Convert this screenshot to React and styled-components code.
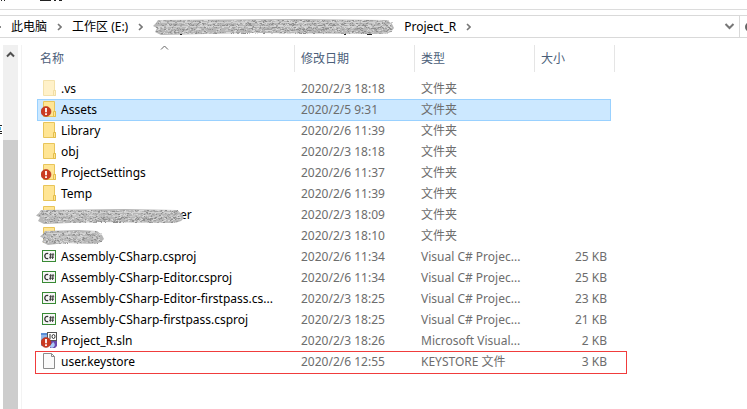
import React from "react";
import styled, { createGlobalStyle, css } from "styled-components";

const Global = createGlobalStyle`
  * { box-sizing: border-box; }
  body {
    margin: 0;
    background: #fff;
    color: #000;
    font: 12px/20px "Noto Sans", "Noto Sans CJK SC", sans-serif;
    overflow: hidden;
  }
  button { font: inherit; color: inherit; background: none; border: 0; padding: 0; }
`;

const Window = styled.div`
  display: flex;
  flex-direction: column;
  height: 100vh;
`;

const Ribbon = styled.div`
  height: 10px;
  flex: none;
  border-bottom: 1px solid #dcdcdc;
`;

const Remnant = styled.svg`
  display: block;
`;

const AddressRow = styled.div`
  display: flex;
  flex: none;
  margin-top: 5px;
  height: 23px;
  border: solid #d9d9d9;
  border-width: 1px 0;
`;

const Crumbs = styled.nav`
  display: flex;
  align-items: center;
  flex: 1;
  min-width: 0;
  gap: 10px;
  white-space: nowrap;
`;

const DropButton = styled.button`
  display: flex;
  align-items: center;
  padding: 0 4px;
`;

const SearchBox = styled.div`
  display: flex;
  align-items: center;
  width: 8px;
  padding-left: 5px;
  overflow: hidden;
  border-left: 1px solid #d9d9d9;
`;

const Body = styled.div`
  display: flex;
  flex: 1;
  min-height: 0;
  padding-top: 7px;
`;

const NavEdge = styled.div`
  width: 3px;
  flex: none;
  padding-top: 79px;
`;

const ScrollTrack = styled.div`
  display: flex;
  flex-direction: column;
  width: 15px;
  flex: none;
  background: #f0f0f0;
`;

const ScrollUp = styled.button`
  display: flex;
  justify-content: center;
  align-items: center;
  height: 18px;
  flex: none;
`;

const ScrollThumb = styled.div`
  flex: 1;
  margin-top: 77px;
  background: #cdcdcd;
`;

const Pane = styled.main`
  flex: 1;
  margin-left: 3px;
  padding-left: 15px;
  border-left: 1px solid #f3f3f3;
`;

const FileTable = styled.table`
  width: 574px;
  table-layout: fixed;
  border-collapse: collapse;
  white-space: nowrap;
`;

const HeadCell = styled.th`
  position: relative;
  width: ${(p) => p.$width};
  padding: 0 0 6px;
  font-weight: 400;
  text-align: left;
  color: #4c607a;
`;

const HeadButton = styled.button`
  display: block;
  width: ${(p) => (p.$last ? "calc(100% + 4px)" : "100%")};
  height: 27px;
  padding-left: ${(p) => (p.$first ? "3px" : "6px")};
  text-align: left;
  border-right: 1px solid #e5e5e5;
`;

const SortMark = styled.svg`
  position: absolute;
  top: 0;
  left: 50%;
  margin-left: -6px;
`;

const annotated = css`
  &::after {
    content: "";
    position: absolute;
    inset: 0 -16px -2px -2px;
    border: 1px solid #f03c3c;
  }
`;

const selected = css`
  background: #cce8ff;
  &::after {
    content: "";
    position: absolute;
    inset: 0 0 -1px;
    border: 1px solid #99d1ff;
  }
`;

const FileRow = styled.tr`
  position: relative;
  height: 21px;
  ${(p) => p.$selected && selected}
  ${(p) => p.$annotated && annotated}
`;

const Cell = styled.td`
  height: 21px;
  padding: 0 4px 0 6px;
  color: #6d6d6d;
  text-align: ${(p) => (p.$end ? "right" : "left")};
`;

const NameCell = styled.td`
  position: relative;
  height: 21px;
  padding: 0 0 0 4px;
`;

const NameContent = styled.div`
  display: flex;
  align-items: center;
  gap: 4px;
`;

const HiddenName = styled.span`
  display: inline-block;
  width: ${(p) => p.$width}px;
`;

const Scrawl = styled.svg`
  display: block;
  flex: none;
`;

const RowScrawl = styled(Scrawl)`
  position: absolute;
  left: ${(p) => p.$left}px;
  top: ${(p) => p.$top}px;
`;

const strokeShades = ["#8f8f8f", "#d8d8d8", "#a2a2a2", "#c9c9c9"];

function grain(width, height) {
  const paths = strokeShades.map(() => "");
  let seed = 7;
  for (let y = 1; y < height - 1; y += 1) {
    const inset = y < 3 || y > height - 4 ? 6 : 3;
    for (let x = inset; x < width - inset; x += 2) {
      seed = (seed * 1103515245 + 12345) % 2147483648;
      const r = seed / 2147483648;
      if (r < 0.62) {
        paths[Math.floor(r * 100) % 4] += `M${x + (y % 2)} ${y + 0.5}h${r < 0.3 ? 1 : 2}`;
      }
    }
  }
  return paths;
}

function Scribble({ as: Tag = Scrawl, width, height = 16, children, ...rest }) {
  const mid = height / 2;
  return (
    <Tag width={width} height={height} overflow="visible" aria-hidden="true" {...rest}>
      <path
        d={`M5 1 L${width * 0.6} 0 L${width - 7} 1 L${width - 2} 5 L${width} 9 L${width - 3} ${height - 3} L${width - 9} ${height - 1} L${width * 0.4} ${height - 2} L8 ${height} L2 ${height - 3} L4 ${mid + 1} L0 ${mid - 1} L3 4Z`}
        fill="#b7b7b7"
      />
      {grain(width, height).map((d, i) => (
        <path key={i} d={d} stroke={strokeShades[i]} />
      ))}
      <path
        d={`M5 ${mid - 0.5}H${width - 8}M8 3.5H${width - 12}`}
        stroke="#d2d2d2"
        strokeDasharray="6 2"
      />
      {children}
    </Tag>
  );
}

const Chevron = () => (
  <svg width="5" height="8" viewBox="0 0 5 8" aria-hidden="true">
    <path d="M1 1l3 3-3 3" fill="none" stroke="#777" strokeWidth="1.6" />
  </svg>
);

const Alert = () => (
  <g>
    <circle cx="5" cy="12.5" r="5" fill="#cb3a21" stroke="#a92c18" strokeWidth="0.5" />
    <path d="M5 9v4.300" stroke="#fff" strokeWidth="1.8" />
    <path d="M5 14.200v1.800" stroke="#fff" strokeWidth="1.8" />
  </g>
);

const Folder = ({ faded, alert }) => (
  <>
    <g opacity={faded ? 0.5 : 1}>
      <path d="M2.500 2.500h11v10h1v5h-12z" fill="#ffe594" stroke="#e8c55a" />
      <path d="M12.500 17.500v-5h2v5z" fill="#ffe594" stroke="#e3bd4b" />
    </g>
    {alert && <Alert />}
  </>
);

const CSharp = () => (
  <>
    <rect x="1.500" y="4.500" width="13" height="11" fill="#f6f6f6" stroke="#388a34" />
    <path d="M7.200 7.700C5.500 6.900 3.800 8 3.800 10s1.700 3.100 3.400 2.300" fill="none" stroke="#333" strokeWidth="1.3" />
    <path d="M9.800 7l-.6 6M12.100 7l-.6 6M8.200 8.800h5M8 11.200h5" stroke="#333" strokeWidth="0.9" />
  </>
);

const Solution = () => (
  <>
    <path d="M0 3h7v13H0z" fill="#8fb6ea" />
    <path d="M0 3h7v2H0z" fill="#5b8ed6" />
    <rect x="6.500" y="2.500" width="9" height="8" fill="#fff" stroke="#555" />
    <path d="M9 4v5" stroke="#333" />
    <ellipse cx="12.500" cy="6.500" rx="1.500" ry="2" fill="none" stroke="#333" />
    <path d="M9 11h7v5l-2 2H9z" fill="#6848ad" />
    <path d="M9 17c0-3 2-3 3-5 3 2 2 5-1 6z" fill="#a9c8f5" />
    <Alert />
  </>
);

const Blank = () => (
  <>
    <path d="M2.500 2.500h8l3 3v12h-11z" fill="#fafafa" stroke="#8c8c8c" />
    <path d="M10.500 2.500v3h3" fill="none" stroke="#8c8c8c" />
  </>
);

const icons = {
  folder: <Folder />,
  faded: <Folder faded />,
  alert: <Folder alert />,
  csharp: <CSharp />,
  solution: <Solution />,
  blank: <Blank />,
};

const files = [
  { icon: "faded", name: ".vs", date: "2020/2/3 18:18", type: "文件夹" },
  { icon: "alert", name: "Assets", date: "2020/2/5 9:31", type: "文件夹", selected: true },
  { icon: "folder", name: "Library", date: "2020/2/6 11:39", type: "文件夹" },
  { icon: "folder", name: "obj", date: "2020/2/3 18:18", type: "文件夹" },
  { icon: "alert", name: "ProjectSettings", date: "2020/2/6 11:37", type: "文件夹" },
  { icon: "folder", name: "Temp", date: "2020/2/6 11:39", type: "文件夹" },
  { icon: "folder", name: "er", hidden: 119, scrawl: { width: 148, left: -1, top: 5 }, date: "2020/2/3 18:09", type: "文件夹" },
  { icon: "folder", name: "", hidden: 40, scrawl: { width: 64, left: 3, top: 5 }, date: "2020/2/3 18:10", type: "文件夹" },
  { icon: "csharp", name: "Assembly-CSharp.csproj", date: "2020/2/6 11:34", type: "Visual C# Projec...", size: "25 KB" },
  { icon: "csharp", name: "Assembly-CSharp-Editor.csproj", date: "2020/2/6 11:34", type: "Visual C# Projec...", size: "25 KB" },
  { icon: "csharp", name: "Assembly-CSharp-Editor-firstpass.cs...", date: "2020/2/3 18:25", type: "Visual C# Projec...", size: "23 KB" },
  { icon: "csharp", name: "Assembly-CSharp-firstpass.csproj", date: "2020/2/3 18:25", type: "Visual C# Projec...", size: "21 KB" },
  { icon: "solution", name: "Project_R.sln", date: "2020/2/3 18:26", type: "Microsoft Visual...", size: "2 KB" },
  { icon: "blank", name: "user.keystore", date: "2020/2/6 12:55", type: "KEYSTORE 文件", size: "3 KB", annotated: true },
];

const columns = [
  { label: "名称", width: "258px" },
  { label: "修改日期", width: "120px" },
  { label: "类型", width: "120px" },
  { label: "大小", width: "76px" },
];

export default function App() {
  return (
    <Window>
      <Global />
      <Ribbon>
        <Remnant width="70" height="3" aria-hidden="true">
          <path d="M1 .5h1M4 .5h1M40 .5h11M54 .5h2M59 .5h3" stroke="#222" />
        </Remnant>
      </Ribbon>
      <AddressRow>
        <Crumbs aria-label="路径">
          <svg width="1" height="8" aria-hidden="true">
            <path d="M0 4h1" stroke="#888" strokeWidth="2" />
          </svg>
          <button>此电脑</button>
          <Chevron />
          <button>工作区 (E:)</button>
          <Chevron />
          <Scribble width={241}>
            <path d="M27 15.500h2M191 15.500h2M214 15.500h5" stroke="#222" />
          </Scribble>
          <button>Project_R</button>
          <Chevron />
        </Crumbs>
        <DropButton aria-label="展开">
          <svg width="11" height="7" viewBox="0 0 11 7">
            <path d="M1.500 1l4 4 4-4" fill="none" stroke="#777" strokeWidth="2" />
          </svg>
        </DropButton>
        <SearchBox>
          <svg width="10" height="12" aria-hidden="true">
            <circle cx="5" cy="6" r="4" fill="none" stroke="#666" strokeWidth="2" />
          </svg>
        </SearchBox>
      </AddressRow>
      <Body>
        <NavEdge>
          <Remnant width="3" height="10" aria-hidden="true">
            <path d="M0 1.500h2M0 7.500h2M0 9.500h2" stroke="#222" />
            <path d="M0 4.500h1" stroke="#4db5e8" strokeWidth="3" />
          </Remnant>
        </NavEdge>
        <ScrollTrack>
          <ScrollUp aria-label="向上滚动">
            <svg width="9" height="7" viewBox="0 0 9 7">
              <path d="M1 5.500l3.500-3.500 3.500 3.500" fill="none" stroke="#505050" strokeWidth="2" />
            </svg>
          </ScrollUp>
          <ScrollThumb />
        </ScrollTrack>
        <Pane>
          <FileTable>
            <thead>
              <tr>
                {columns.map((c, i) => (
                  <HeadCell key={c.label} $width={c.width} scope="col">
                    <HeadButton $first={i === 0} $last={i === 3}>{c.label}</HeadButton>
                    {i === 0 && (
                      <SortMark width="9" height="5" aria-hidden="true">
                        <path d="M1 4.500l3.500-3.500 3.500 3.500" fill="none" stroke="#666" />
                      </SortMark>
                    )}
                  </HeadCell>
                ))}
              </tr>
            </thead>
            <tbody>
              {files.map((f, i) => (
                <FileRow key={i} $selected={f.selected} $annotated={f.annotated}>
                  <NameCell>
                    <NameContent>
                      <svg width="16" height="21" aria-hidden="true">{icons[f.icon]}</svg>
                      <span>
                        {f.hidden && <HiddenName $width={f.hidden} />}
                        {f.name}
                      </span>
                    </NameContent>
                    {f.scrawl && (
                      <Scribble as={RowScrawl} width={f.scrawl.width} height={15} $left={f.scrawl.left} $top={f.scrawl.top} />
                    )}
                  </NameCell>
                  <Cell>{f.date}</Cell>
                  <Cell>{f.type}</Cell>
                  <Cell $end>{f.size}</Cell>
                </FileRow>
              ))}
            </tbody>
          </FileTable>
        </Pane>
      </Body>
    </Window>
  );
}
